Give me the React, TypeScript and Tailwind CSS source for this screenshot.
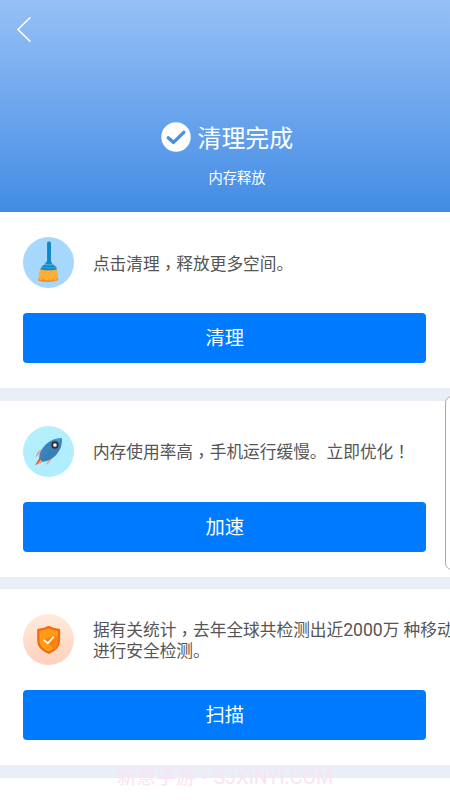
import type { ReactNode } from 'react';

// 逗号在字格内水平居中
function Comma() {
    return <span className="relative top-[4px] font-['Noto_Sans_CJK_TC',sans-serif]" lang="zh-TW">，</span>;
}

function BroomIcon() {
    return (
        <svg viewBox="0 0 50 50" className="w-full h-full">
            <circle cx="25" cy="25" r="25" fill="#a6d8fd" />
            <rect x="23.6" y="4.4" width="3.8" height="22" rx="1.5" fill="#0f86c8" />
            <path d="M17 31 L33 31 C33.8 34.5 34.8 38.5 34.4 42.2 Q25 45.6 15 42.4 C15 38.5 16 34.5 17 31Z" fill="#fdae35" />
            <path d="M15 41 L18 42.4 L20 40.8 L22 42.8 L25 41.8 L27 43 L29.5 41 L31 42.6 L34.4 40.8 L34.4 42.4 Q25 45.8 15 42.6Z" fill="#f58b22" />
            <path d="M22.5 24.4 Q25.2 22.8 28 24.4 L28.8 26.6 Q33 28.2 33.2 31.8 Q25 33.6 17.2 31.8 Q17.8 28.2 21.6 26.6Z" fill="#128acb" />
            <path d="M21.5 27 Q25 28 28.8 27" fill="none" stroke="#7cc6ee" strokeWidth="0.7" />
            <path d="M18.4 29.8 Q25 31.2 32 29.8" fill="none" stroke="#58b4e6" strokeWidth="0.6" />
        </svg>
    );
}

function RocketIcon() {
    return (
        <svg viewBox="0 0 50 50" className="w-full h-full">
            <defs>
                <linearGradient id="sky" x1="0" y1="0" x2="0" y2="1">
                    <stop offset="0" stopColor="#b5effb" />
                    <stop offset="1" stopColor="#afedff" />
                </linearGradient>
            </defs>
            <circle cx="25" cy="25" r="25" fill="url(#sky)" />
            <path d="M18.2 22.5 Q12.5 25.5 12.4 30.8 L17.5 26.5Z M28 31.5 Q27.5 36 22.2 38.2 L25 32.5Z" fill="#d3adb4" />
            <path d="M16.5 31 L11.8 38.5 L20 34.5Z" fill="#ed4648" />
            <path d="M17.5 33 L13.6 37.2 L18.8 34.5Z" fill="#ffbd3e" />
            <path d="M38 12 Q29.5 11.5 22.5 18 C18.5 22 16 26.5 15.8 31.2 L19.6 34.8 C25 34.5 30 31.5 33.2 27.5 Q38.8 20.5 38 12Z" fill="#3b83bd" />
            <path d="M38 12 Q34.5 11.9 31.8 12.8 L37 18.2 Q38.2 15 38 12Z" fill="#4c97cf" />
            <path d="M37.8 12.2 C31 19 24 26.5 17.8 33 L19.6 34.8 C25 34.5 30 31.5 33.2 27.5 Q38.8 20.5 37.8 12.2Z" fill="#347bb6" opacity="0.5" />
            <circle cx="31.3" cy="18.6" r="2.7" fill="#fff" stroke="#382d34" strokeWidth="1.8" />
        </svg>
    );
}

function ShieldIcon() {
    return (
        <svg viewBox="0 0 50 50" className="w-full h-full">
            <defs>
                <linearGradient id="peach" x1="0" y1="0" x2="0" y2="1">
                    <stop offset="0" stopColor="#ffecdb" />
                    <stop offset="1" stopColor="#ffd1bd" />
                </linearGradient>
            </defs>
            <circle cx="25" cy="25" r="25" fill="url(#peach)" />
            <path d="M25.2 12.8 Q30 15.4 35.3 15.6 V26 Q35.3 34 25.2 38 Q15 34 15 26 V15.6 Q20.5 15.4 25.2 12.8Z" fill="#ff9b16" stroke="#f36a12" strokeWidth="2.2" strokeLinejoin="round" />
            <path d="M21 25 L31 35 Q34.4 31.5 34.4 26 V22 L30 21Z" fill="#f78412" />
            <path d="M20.3 25.4 L24.3 28.8 L30.3 22.2" fill="none" stroke="#fff" strokeWidth="1.7" />
        </svg>
    );
}

type CardProps = {
    icon: ReactNode;
    action: string;
    children: ReactNode;
};

function Card({ icon, action, children }: CardProps) {
    return (
        <section className="h-[176.2px] shrink-0 bg-white pt-[25.2px]">
            <div className="h-[51px] pl-[23.4px] flex items-center">
                <div className="w-[51px] h-[51px] shrink-0">{icon}</div>
                <p className="ml-[18.5px] pt-[2px] text-[16.7px] leading-[21px] text-[#555] whitespace-nowrap">{children}</p>
            </div>
            <button className="block mt-[24.8px] ml-[23.4px] w-[402.6px] h-[50px] pt-[3px] rounded-[4px] bg-[#007aff] text-white text-[19.3px]">
                {action}
            </button>
        </section>
    );
}

export default function App() {
    return (
        <div className="relative w-[450px] h-[800px] overflow-hidden flex flex-col gap-[12.4px] bg-[#eaeff7] font-[Roboto,'Noto_Sans_CJK_SC',sans-serif]">
            <header className="h-[212px] -mb-[12.4px] shrink-0 bg-linear-to-b from-[#96c0f6] to-[#418ce4] text-white">
                <div className="h-[60px] pt-[16px] pl-[16px]">
                    <svg viewBox="0 0 16 27" className="w-4 h-[27px]" fill="none" stroke="#fff" strokeWidth="1.6" strokeLinecap="round">
                        <path d="M14 1.8 L2 13.5 L14 25.2" />
                    </svg>
                </div>
                <div className="mt-[59px] h-9 pl-[161px] flex items-center">
                    <svg viewBox="0 0 30 30" className="w-[30px] h-[30px]">
                        <circle cx="15" cy="15" r="14.7" fill="#fff" />
                        <path d="M7.2 15.8 L12.5 20.4 L22.8 10.4" fill="none" stroke="#4a90e5" strokeWidth="3.4" strokeLinecap="round" strokeLinejoin="round" />
                    </svg>
                    <h1 className="ml-[6.5px] pt-[3px] text-[23.9px] leading-9">清理完成</h1>
                </div>
                <p className="mt-[11px] pl-[24px] text-center text-[14.3px] leading-6">内存释放</p>
            </header>

            <Card icon={<BroomIcon />} action="清理">
                点击清理<Comma />释放更多空间。
            </Card>
            <Card icon={<RocketIcon />} action="加速">
                内存使用率高<Comma />手机运行缓慢。立即优化<span className="font-['Noto_Sans_CJK_TC',sans-serif]" lang="zh-TW">！</span>
            </Card>
            <Card icon={<ShieldIcon />} action="扫描">
                据有关统计<Comma />去年全球共检测出近<span className="text-[17.6px]">2000</span>万 种移动
                <br />
                进行安全检测。
            </Card>
            <div className="h-[30px] shrink-0 bg-white" />

            {/* 右侧边缘面板 */}
            <div className="absolute left-[445px] top-[396px] w-5 h-[174px] rounded-[7px] border border-[#aaa] bg-white" />

            {/* 水印 */}
            <div className="absolute left-[117px] top-[764px] text-[19.6px] leading-7 text-[#f9e3f6] whitespace-nowrap">
                新意手游 <span className="mx-[1px]">•</span> SJXINYI.COM
            </div>
        </div>
    );
}
